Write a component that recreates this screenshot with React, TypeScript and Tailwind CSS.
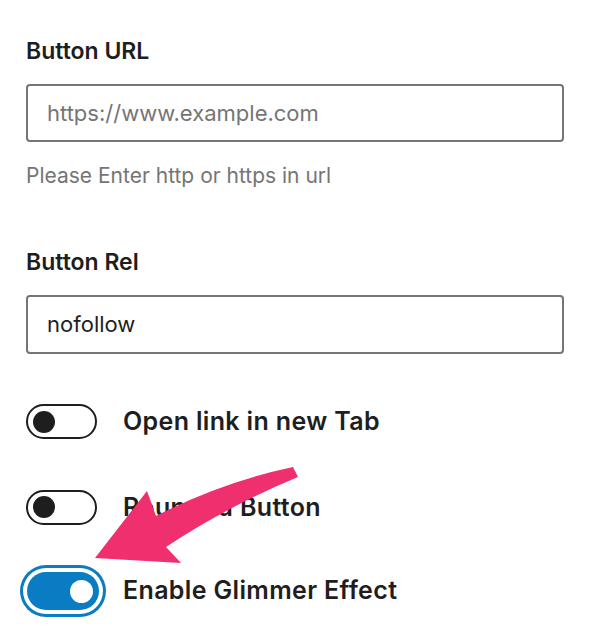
import React from 'react';

const Toggle: React.FC<{ on?: boolean }> = ({ on }) => {
  if (on) {
    // checked + focused: blue track with a detached focus ring
    return (
      <div className="rounded-full p-[7px] ring-[3px] ring-[#0a7cc4] ring-inset">
        <div className="flex h-[38px] w-[72px] items-center justify-end rounded-full bg-[#0a7cc4] pr-[6px]">
          <div className="h-[23px] w-[23px] rounded-full bg-white" />
        </div>
      </div>
    );
  }
  return (
    <div className="flex h-[35px] w-[71px] items-center rounded-full border-2 border-[#1e1e1e] bg-white pl-[5px]">
      <div className="h-[22px] w-[22px] rounded-full bg-[#1e1e1e]" />
    </div>
  );
};

export default function App() {
  return (
    <div className="relative min-h-[642px] w-[594px] bg-white pl-[26px] pr-[30px] pt-[36px] font-['Inter',sans-serif] text-[#1e1e1e]">
      {/* Button URL */}
      <label className="block text-[23px] font-semibold leading-[30px]">Button URL</label>
      <div className="mt-[18px] flex h-[58px] items-center rounded-[4px] border-2 border-[#757575] px-[19px]">
        <span className="text-[22px] text-[#757575]">https://www.example.com</span>
      </div>
      <p className="mt-[20px] text-[21px] leading-[28px] text-[#757575]">Please Enter http or https in url</p>

      {/* Button Rel */}
      <label className="mt-[57px] block text-[23px] font-semibold leading-[30px]">Button Rel</label>
      <div className="mt-[18px] flex h-[59px] items-center rounded-[4px] border-2 border-[#757575] px-[19px]">
        <span className="text-[22px] text-[#1e1e1e]">nofollow</span>
      </div>

      {/* Toggles */}
      <div className="mt-[49px] flex items-center gap-[26px]">
        <Toggle />
        <span className="text-[25px] font-semibold tracking-[0.35px]">Open link in new Tab</span>
      </div>
      <div className="mt-[48px] flex items-center gap-[26px]">
        <Toggle />
        <span className="text-[25px] font-semibold tracking-[0.35px]">Rounded Button</span>
      </div>
      <div className="-ml-[6px] mt-[39px] flex items-center gap-[17px]">
        <Toggle on />
        <span className="text-[25px] font-semibold tracking-[0.35px]">Enable Glimmer Effect</span>
      </div>

      {/* annotation arrow */}
      <svg className="pointer-events-none absolute left-0 top-0" width="594" height="642" viewBox="0 0 594 642">
        <path
          d="M293 467 L298 477 Q228 506 166 547 L181 563 L95 558 L147 491 L156 516 Q222 482 293 467 Z"
          fill="#ef2f6e"
        />
      </svg>
    </div>
  );
}
